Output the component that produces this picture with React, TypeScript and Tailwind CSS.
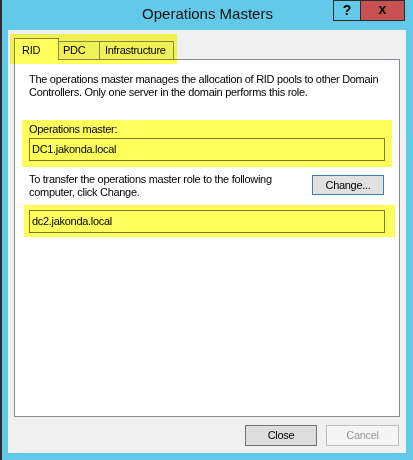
import React from "react";

const font = { fontFamily: '"Liberation Sans", Arial, sans-serif' };

function TextBox({ value }: { value: string }) {
  return (
    <div className="flex h-[23px] w-[356px] items-center border border-[#7a7a7a] bg-white pb-[1px] pl-[2px] text-[11px] tracking-[-0.3px] text-black">
      {value}
    </div>
  );
}

export default function App() {
  return (
    <div
      className="relative flex h-[460px] w-[413px] flex-col border-l-2 border-[#2b2b2b] bg-[#63c9e9]"
      style={font}
    >
      {/* title bar */}
      <div className="grid h-[30px] shrink-0 grid-cols-[1fr_auto_1fr]">
        <div />
        <div className="flex items-center pb-[1px] text-[15px] text-[#111]">Operations Masters</div>
        <div className="flex items-start justify-end pr-[8px]">
          <div className="flex h-[21px] border border-[#2b2b2b]">
            <div className="flex w-[27px] items-center justify-center border-r border-[#2b2b2b] text-[14px] font-bold text-black">
              ?
            </div>
            <div className="flex w-[43px] items-center justify-center bg-[#c75050] pb-[2px] text-[14px] font-bold text-black">
              x
            </div>
          </div>
        </div>
      </div>

      {/* client area */}
      <div className="ml-[6px] flex h-[423px] w-[398px] flex-col bg-[#f0f0f0] pl-[6px] pt-[8px] text-[11px] tracking-[-0.3px] text-black">
        {/* tabs */}
        <div className="flex h-[21px] items-end">
          <div className="relative z-10 mb-[-1px] flex h-[22px] w-[45px] items-start border-x border-t border-[#898c95] bg-white pl-[7px] pt-[3px]">
            RID
          </div>
          <div className="flex h-[18px] w-[41px] items-center border-r border-t border-[#898c95] pl-[4px]">
            PDC
          </div>
          <div className="flex h-[18px] w-[74px] items-center border-r border-t border-[#898c95] pl-[5px]">
            Infrastructure
          </div>
        </div>

        {/* tab page */}
        <div className="flex h-[358px] w-[386px] flex-col border border-[#898c95] bg-white pl-[14px] pt-[13px] leading-[13px]">
          <p className="whitespace-nowrap">
            The operations master manages the allocation of RID pools to other Domain
            <br />
            Controllers. Only one server in the domain performs this role.
          </p>
          <p className="mt-[24px]">Operations master:</p>
          <div className="mt-[2px]">
            <TextBox value="DC1.jakonda.local" />
          </div>
          <div className="mt-[12px] flex items-start">
            <p className="w-[283px] whitespace-nowrap">
              To transfer the operations master role to the following
              <br />
              computer, click Change.
            </p>
            <button
              type="button"
              className="mt-[2px] h-[20px] w-[72px] border border-[#3c7fb1] bg-[#e1e1e1] text-[11px] tracking-[-0.3px] text-black"
            >
              Change...
            </button>
          </div>
          <div className="mt-[11px]">
            <TextBox value="dc2.jakonda.local" />
          </div>
        </div>

        {/* dialog buttons */}
        <div className="mt-[8px] flex justify-end gap-[9px] pr-[7px]">
          <button
            type="button"
            className="h-[21px] w-[72px] border border-[#707070] bg-[#dddddd] text-[11px] tracking-[-0.3px] text-black"
          >
            Close
          </button>
          <button
            type="button"
            disabled
            className="h-[21px] w-[73px] border border-[#bfbfbf] bg-[#f4f4f4] text-[11px] tracking-[-0.3px] text-[#9a9a9a]"
          >
            Cancel
          </button>
        </div>
      </div>

      {/* yellow highlight annotations */}
      <div className="pointer-events-none absolute left-[8px] top-[34px] z-20 h-[30px] w-[167px] bg-[#ffff5c] mix-blend-multiply" />
      <div className="pointer-events-none absolute left-[20px] top-[120px] z-20 h-[47px] w-[370px] bg-[#ffff5c] mix-blend-multiply" />
      <div className="pointer-events-none absolute left-[22px] top-[205px] z-20 h-[32px] w-[371px] bg-[#ffff5c] mix-blend-multiply" />
    </div>
  );
}
